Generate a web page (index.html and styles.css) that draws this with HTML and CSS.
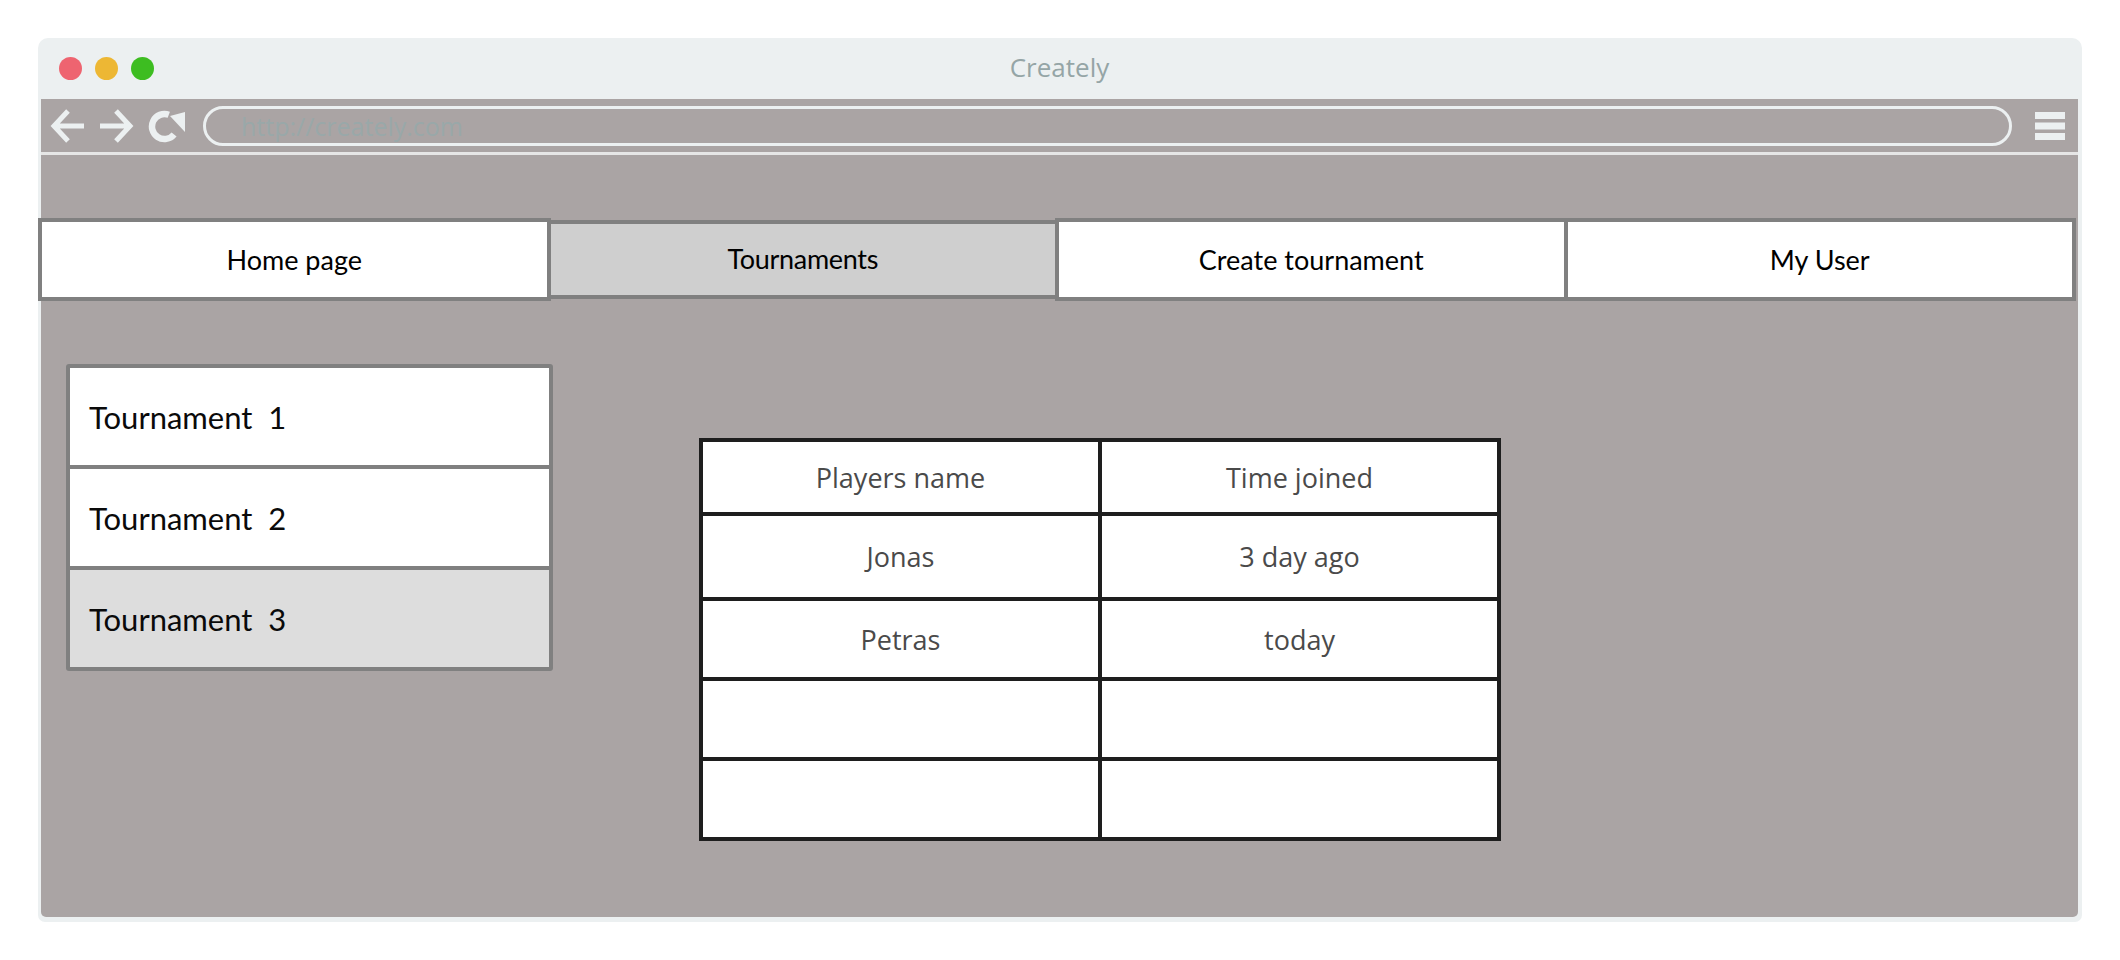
FILE: index.html
```html
<!DOCTYPE html>
<html lang="en">
<head>
<meta charset="utf-8">
<title>Creately</title>
<link rel="stylesheet" href="styles.css">
</head>
<body>
<div class="window">
  <div class="titlebar">
    <div class="lights">
      <span class="light red"></span>
      <span class="light yellow"></span>
      <span class="light green"></span>
    </div>
    <div class="title">Creately</div>
    <div></div>
  </div>
  <div class="toolbar">
    <svg class="icon back" width="36" height="36" viewBox="0 0 36 36">
      <path d="M34 18H5M18 3L4 18L18 33" fill="none" stroke="#ecf0f1" stroke-width="5"/>
    </svg>
    <svg class="icon fwd" width="36" height="36" viewBox="0 0 36 36">
      <path d="M1 18H30M17 3L31 18L17 33" fill="none" stroke="#ecf0f1" stroke-width="5"/>
    </svg>
    <svg class="icon reload" width="38" height="34" viewBox="0 0 38 34">
      <path d="M20.8 4.75 A12.5 12.5 0 1 0 26.1 24.5" fill="none" stroke="#ecf0f1" stroke-width="6.5"/>
      <path d="M22 6 L37 2 L37 22 Z" fill="#ecf0f1"/>
    </svg>
    <div class="url">http://creately.com</div>
    <svg class="icon menu" width="30" height="28" viewBox="0 0 30 28">
      <rect x="0" y="0" width="30" height="7" fill="#ecf0f1"/>
      <rect x="0" y="10.5" width="30" height="7" fill="#ecf0f1"/>
      <rect x="0" y="21" width="30" height="7" fill="#ecf0f1"/>
    </svg>
  </div>
  <div class="content">
    <nav class="tabs">
      <div class="tab">Home page</div>
      <div class="tab active">Tournaments</div>
      <div class="tab">Create tournament</div>
      <div class="tab">My User</div>
    </nav>
    <div class="main">
      <ul class="list">
        <li class="item">Tournament&nbsp; 1</li>
        <li class="item">Tournament&nbsp; 2</li>
        <li class="item selected">Tournament&nbsp; 3</li>
      </ul>
      <div class="table">
        <div class="cell">Players name</div>
        <div class="cell">Time joined</div>
        <div class="cell">Jonas</div>
        <div class="cell">3 day ago</div>
        <div class="cell">Petras</div>
        <div class="cell">today</div>
        <div class="cell"></div>
        <div class="cell"></div>
        <div class="cell"></div>
        <div class="cell"></div>
      </div>
    </div>
  </div>
</div>
</body>
</html>
```

FILE: styles.css
```css
html, body {
  margin: 0;
  padding: 0;
  background: #ffffff;
}

.window {
  margin: 38px 0 0 38px;
  width: 2044px;
  box-sizing: border-box;
  background: #ecf0f1;
  border-radius: 10px 10px 7px 7px;
  padding: 0 4px 5px 3px;
}

.titlebar {
  height: 61px;
  display: grid;
  grid-template-columns: 1fr auto 1fr;
  align-items: center;
}

.lights {
  display: flex;
  gap: 13px;
  padding-left: 18px;
}

.light {
  width: 23px;
  height: 23px;
  border-radius: 50%;
  display: block;
}

.red { background: #ee6470; }
.yellow { background: #edb734; }
.green { background: #3dbd21; }

.title {
  font-family: "Open Sans", "DejaVu Sans", sans-serif;
  font-size: 26px;
  color: #95a5a6;
  line-height: 1;
  margin-top: -4px;
}

.toolbar {
  height: 53px;
  background: #aaa4a4;
  border-bottom: 3px solid #e6e6e6;
  display: flex;
  align-items: center;
  padding-left: 9px;
}

.icon {
  display: block;
  flex: none;
}

.fwd { margin-left: 13px; }
.reload { margin-left: 13px; margin-top: 3px; }

.url {
  flex: 1;
  margin-left: 17px;
  height: 40px;
  box-sizing: border-box;
  border: 3px solid #ecf0f1;
  border-radius: 20px;
  padding-left: 35px;
  font-family: "Open Sans", "DejaVu Sans", sans-serif;
  font-size: 25px;
  line-height: 34px;
  color: #99a8a9;
}

.menu {
  margin-left: 23px;
  margin-right: 13px;
}

.content {
  height: 762px;
  background: #aaa4a4;
  border-radius: 0 0 5px 5px;
  padding-top: 63px;
  box-sizing: border-box;
}

.tabs {
  display: flex;
  margin-left: -3px;
  margin-right: 2px;
  height: 83px;
}

.tab {
  flex: 1;
  box-sizing: border-box;
  border: 4px solid #808080;
  background: #ffffff;
  display: flex;
  align-items: center;
  justify-content: center;
  font-family: Lato, "Liberation Sans", sans-serif;
  font-size: 27px;
  color: #000000;
}

.tab + .tab {
  margin-left: -4px;
}

.tab.active {
  background: #cfcfcf;
  margin-top: 2px;
  margin-bottom: 2px;
  padding-bottom: 2px;
  letter-spacing: -0.3px;
}

.main {
  display: flex;
  align-items: flex-start;
}

.list {
  list-style: none;
  margin: 63px 0 0 25px;
  padding: 0;
  width: 487px;
  box-sizing: border-box;
  border: 4px solid #808080;
  border-radius: 3px;
}

.item {
  height: 97px;
  display: flex;
  align-items: center;
  padding-left: 19px;
  background: #ffffff;
  font-family: Lato, "Liberation Sans", sans-serif;
  font-size: 31px;
  color: #0a0a0a;
}

.item + .item {
  border-top: 4px solid #808080;
}

.item.selected {
  background: #dddddd;
}

.table {
  margin: 137px 0 0 146px;
  width: 802px;
  box-sizing: border-box;
  display: grid;
  grid-template-columns: 1fr 1fr;
  grid-template-rows: 70px 81px 76px 76px 76px;
  gap: 4px;
  padding: 4px;
  background: #1e1e1e;
}

.cell {
  background: #ffffff;
  display: flex;
  align-items: center;
  justify-content: center;
  font-family: "Open Sans", "DejaVu Sans", sans-serif;
  font-size: 27px;
  color: #4a4a4a;
}
```
